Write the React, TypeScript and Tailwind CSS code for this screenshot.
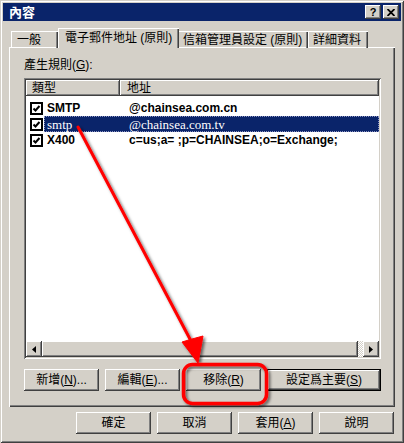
import React from 'react';

const raised =
  'shadow-[inset_-1px_-1px_#404040,inset_1px_1px_#ffffff,inset_-2px_-2px_#808080,inset_2px_2px_#d4d0c8]';
const raisedDefault =
  'shadow-[inset_0_0_0_1px_#000000,inset_-2px_-2px_#404040,inset_2px_2px_#ffffff,inset_-3px_-3px_#808080]';
const sunken =
  'shadow-[inset_1px_1px_#808080,inset_-1px_-1px_#ffffff,inset_2px_2px_#404040,inset_-2px_-2px_#d4d0c8]';
const headerCell =
  'shadow-[inset_-1px_-1px_#404040,inset_1px_1px_#ffffff,inset_-2px_-2px_#808080]';

const Key: React.FC<{ k: string }> = ({ k }) => (
  <>
    (<span className="underline underline-offset-1">{k}</span>)
  </>
);

const Button: React.FC<{ children: React.ReactNode; wide?: boolean; isDefault?: boolean }> = ({
  children,
  wide,
  isDefault,
}) => (
  <div
    className={`${wide ? 'w-[114px]' : 'w-[75px]'} h-[22px] flex items-center justify-center text-[12px] leading-[12px] text-black bg-[#d4d0c8] ${
      isDefault ? raisedDefault : raised
    }`}
  >
    {children}
  </div>
);

const CheckBox = () => (
  <svg width="13" height="13" viewBox="0 0 13 13" className="shrink-0">
    <rect x="1" y="1" width="11" height="11" fill="#fff" stroke="#000" strokeWidth="2" />
    <path d="M3.5 6.5 L5.5 8.5 L9.5 4" fill="none" stroke="#000" strokeWidth="2" />
  </svg>
);

const Arrow: React.FC<{ dir: 'left' | 'right' }> = ({ dir }) => (
  <div className={`w-[16px] h-[16px] flex items-center justify-center bg-[#d4d0c8] ${raised}`}>
    <svg width="4" height="7" viewBox="0 0 4 7">
      {dir === 'left' ? <path d="M4 0 L0 3.5 L4 7 Z" fill="#000" /> : <path d="M0 0 L4 3.5 L0 7 Z" fill="#000" />}
    </svg>
  </div>
);

const rows = [
  { type: 'SMTP', addr: '@chainsea.com.cn', selected: false },
  { type: 'smtp', addr: '@chainsea.com.tv', selected: true },
  { type: 'X400', addr: 'c=us;a= ;p=CHAINSEA;o=Exchange;', selected: false },
];

export default function App() {
  return (
    <div className="relative w-[404px] h-[443px] overflow-hidden bg-[#d4d0c8] p-[3px] font-['Liberation_Sans','Noto_Sans_CJK_TC',sans-serif] text-black shadow-[inset_1px_1px_#d4d0c8,inset_-1px_-1px_#404040,inset_2px_2px_#ffffff,inset_-2px_-2px_#808080]">
      {/* title bar */}
      <div className="h-[18px] bg-[#0a246a] flex items-center pl-[6px] pr-[2px]">
        <span className="text-white font-bold text-[13px] leading-[13px]">內容</span>
        <div className="ml-auto flex gap-[2px]">
          <div className={`w-[16px] h-[14px] bg-[#d4d0c8] flex items-center justify-center ${raised}`}>
            <span className="font-bold text-[11px] leading-[11px] mt-px">?</span>
          </div>
          <div className={`w-[16px] h-[14px] bg-[#d4d0c8] flex items-center justify-center ${raised}`}>
            <svg width="8" height="7" viewBox="0 0 8 7">
              <path d="M0.5 0 L7.5 7 M7.5 0 L0.5 7" stroke="#000" strokeWidth="1.8" />
            </svg>
          </div>
        </div>
      </div>

      <div className="px-[6px]">
        {/* tabs */}
        <div className="relative z-10 mt-[7px] h-[20px] flex items-end pl-[2px] text-[12px] leading-[12px]">
          <div className="w-[47px] h-[17px] flex items-center pl-[6px] shadow-[inset_1px_1px_#ffffff,inset_-1px_0_#404040,inset_-2px_0_#808080]">
            一般
          </div>
          <div className="w-[121px] h-[20px] flex items-center pl-[7px] bg-[#d4d0c8] shadow-[inset_1px_1px_#ffffff,inset_-1px_0_#404040,inset_-2px_0_#808080]">
            電子郵件地址 (原則)
          </div>
          <div className="w-[129px] h-[17px] flex items-center pl-[4px] shadow-[inset_0_1px_#ffffff,inset_-1px_0_#404040,inset_-2px_0_#808080]">
            信箱管理員設定 (原則)
          </div>
          <div className="w-[60px] h-[17px] flex items-center pl-[5px] shadow-[inset_1px_1px_#ffffff,inset_-1px_0_#404040,inset_-2px_0_#808080]">
            詳細資料
          </div>
        </div>

        {/* tab panel */}
        <div className="-mt-px h-[360px] flex flex-col pl-[15px] pr-[14px] pt-[12px] pb-[16px] shadow-[inset_1px_1px_#ffffff,inset_-1px_-1px_#404040,inset_-2px_-2px_#808080]">
          <div className="h-[12px] text-[12px] leading-[12px]">
            產生規則<Key k="G" />:
          </div>

          <div className={`mt-[7px] h-[281px] p-[2px] bg-white flex flex-col ${sunken}`}>
            <div className="h-[16px] flex text-[12px] leading-[12px] bg-[#d4d0c8] shrink-0">
              <div className={`w-[94px] flex items-center pl-[6px] ${headerCell}`}>類型</div>
              <div className={`flex-1 flex items-center pl-[7px] ${headerCell}`}>地址</div>
            </div>
            <div className="flex-1 pt-[4px]">
              {rows.map(r => (
                <div key={r.type} className="h-[16px] flex items-center">
                  <div className="pl-[4px] pr-px flex items-center">
                    <CheckBox />
                  </div>
                  {r.selected ? (
                    <div className="flex-1 h-[16px] flex items-center bg-[#0a246a] text-white border border-dotted border-[#8a92c0] font-['Liberation_Serif',serif] text-[13px] leading-[13px]">
                      <span className="w-[84px] pl-[2px]">{r.type}</span>
                      <span>{r.addr}</span>
                    </div>
                  ) : (
                    <div className="flex-1 h-[16px] flex items-center font-bold text-[12px] leading-[12px]">
                      <span className="w-[85px] pl-[3px]">{r.type}</span>
                      <span>{r.addr}</span>
                    </div>
                  )}
                </div>
              ))}
            </div>
            <div className="h-[16px] flex shrink-0">
              <Arrow dir="left" />
              <div className={`flex-1 bg-[#d4d0c8] ${raised}`} />
              <div className="w-[5px] bg-[repeating-conic-gradient(#ffffff_0_25%,#d4d0c8_0_50%)] bg-[length:2px_2px]" />
              <Arrow dir="right" />
            </div>
          </div>

          <div className="mt-[10px] flex gap-[6px]">
            <Button>
              新增<Key k="N" />...
            </Button>
            <Button>
              編輯<Key k="E" />...
            </Button>
            <Button>
              移除<Key k="R" />
            </Button>
            <Button wide isDefault>
              設定爲主要<Key k="S" />
            </Button>
          </div>
        </div>

        {/* dialog buttons */}
        <div className="mt-[5px] flex justify-end gap-[6px] pr-px">
          <Button>確定</Button>
          <Button>取消</Button>
          <Button>
            套用<Key k="A" />
          </Button>
          <Button>說明</Button>
        </div>
      </div>

      {/* red annotation drawn over the dialog */}
      <svg className="absolute inset-0 pointer-events-none" width="404" height="443" viewBox="0 0 404 443">
        <defs>
          <filter id="shade" x="-20%" y="-20%" width="140%" height="140%">
            <feDropShadow dx="2" dy="2" stdDeviation="1.5" floodColor="#000" floodOpacity="0.55" />
          </filter>
        </defs>
        <g filter="url(#shade)">
          <path d="M78 127 L191 341" stroke="#ff0000" strokeWidth="3" strokeLinecap="round" fill="none" />
          <path d="M198 363 L182 342 L192 339 L203 336 Z" fill="#ff0000" stroke="#ff0000" strokeWidth="1" strokeLinejoin="round" />
          <rect x="183.5" y="364.5" width="83" height="39" rx="9" fill="none" stroke="#ff0000" strokeWidth="3.5" />
        </g>
      </svg>
    </div>
  );
}
